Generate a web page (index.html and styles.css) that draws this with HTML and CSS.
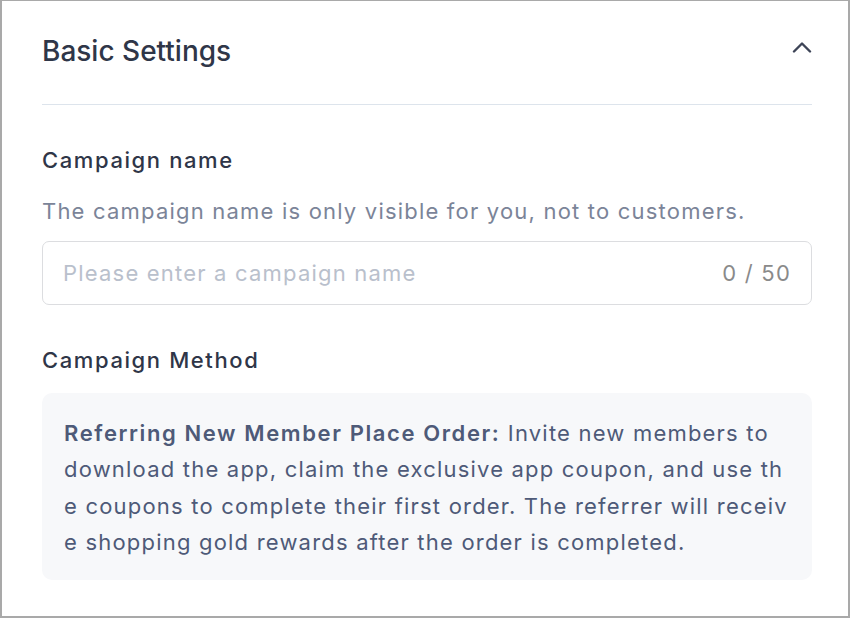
FILE: index.html
```html
<!DOCTYPE html>
<html>
<head>
    <title>Basic Settings</title>
    <link rel="stylesheet" href="styles.css">
</head>
<body>

<div class="card">
    <div class="card-header">
        <h2>Basic Settings</h2>
        <button class="collapse-button" aria-label="Collapse">
            <svg width="20" height="12" viewBox="0 0 20 12">
                <path d="M2 10.5 L10 2.5 L18 10.5" fill="none" stroke="currentColor" stroke-width="2.4"
                      stroke-linecap="round" stroke-linejoin="round"/>
            </svg>
        </button>
    </div>

    <div class="field">
        <label for="campaignName">Campaign name</label>
        <p class="hint">The campaign name is only visible for you, not to customers.</p>
        <div class="text-input">
            <input type="text" id="campaignName" placeholder="Please enter a campaign name" maxlength="50">
            <span class="counter">0 / 50</span>
        </div>
    </div>

    <div class="field">
        <label>Campaign Method</label>
        <div class="method-box">
            <b>Referring New Member Place Order:</b> Invite new members to download the app, claim the exclusive app coupon, and use the coupons to complete their first order. The referrer will receive shopping gold rewards after the order is completed.
        </div>
    </div>
</div>

</body>
</html>
```

FILE: styles.css
```css
:root {
    --text-dark: #2f3648;
    --text-muted: #7b8498;
    --placeholder: #b9c0cc;
    --border: #dcdde0;
    --divider: #dde4ec;
    --box-bg: #f7f8fa;
    --box-text: #4e5a78;
}

body {
    margin: 0;
    font-family: Inter, "Noto Sans", sans-serif;
    background-color: #ffffff;
    color: var(--text-dark);
}

.card {
    height: 618px;
    box-sizing: border-box;
    border: 2px solid #a9a9a9;
    border-top-width: 1px;
    padding: 0 36px 0 40px;
}

.card-header {
    display: flex;
    align-items: center;
    justify-content: space-between;
    padding: 32px 0 35px;
    border-bottom: 1px solid var(--divider);
}

.card-header h2 {
    margin: 0;
    font-size: 28px;
    line-height: 36px;
    font-weight: 500;
}

.collapse-button {
    background: none;
    border: none;
    padding: 0;
    color: #3d4457;
    display: flex;
    cursor: pointer;
    margin-top: -8px;
}

.field {
    margin-top: 41px;
}

.field label {
    display: block;
    font-size: 22px;
    letter-spacing: 1.6px;
    line-height: 28px;
    font-weight: 500;
}

.hint {
    margin: 23px 0 16px;
    font-size: 22px;
    letter-spacing: 1.2px;
    line-height: 28px;
    color: var(--text-muted);
}

.text-input {
    display: flex;
    align-items: center;
    height: 64px;
    box-sizing: border-box;
    border: 1px solid var(--border);
    border-radius: 7px;
    padding: 0 20px;
}

.text-input input {
    flex: 1;
    min-width: 0;
    border: none;
    outline: none;
    padding: 0;
    font-family: inherit;
    font-size: 22px;
    letter-spacing: 1.2px;
    color: var(--text-dark);
}

.text-input input::placeholder {
    color: var(--placeholder);
}

.counter {
    font-size: 22px;
    letter-spacing: 1.2px;
    color: #8a8a8a;
}

.method-box {
    margin-top: 19px;
    background-color: var(--box-bg);
    border-radius: 10px;
    padding: 22px 24px 19px 22px;
    font-size: 22px;
    letter-spacing: 1.2px;
    line-height: 36.4px;
    color: var(--box-text);
    word-break: break-all;
}

.method-box b {
    font-weight: 600;
    letter-spacing: 1.6px;
}
```
